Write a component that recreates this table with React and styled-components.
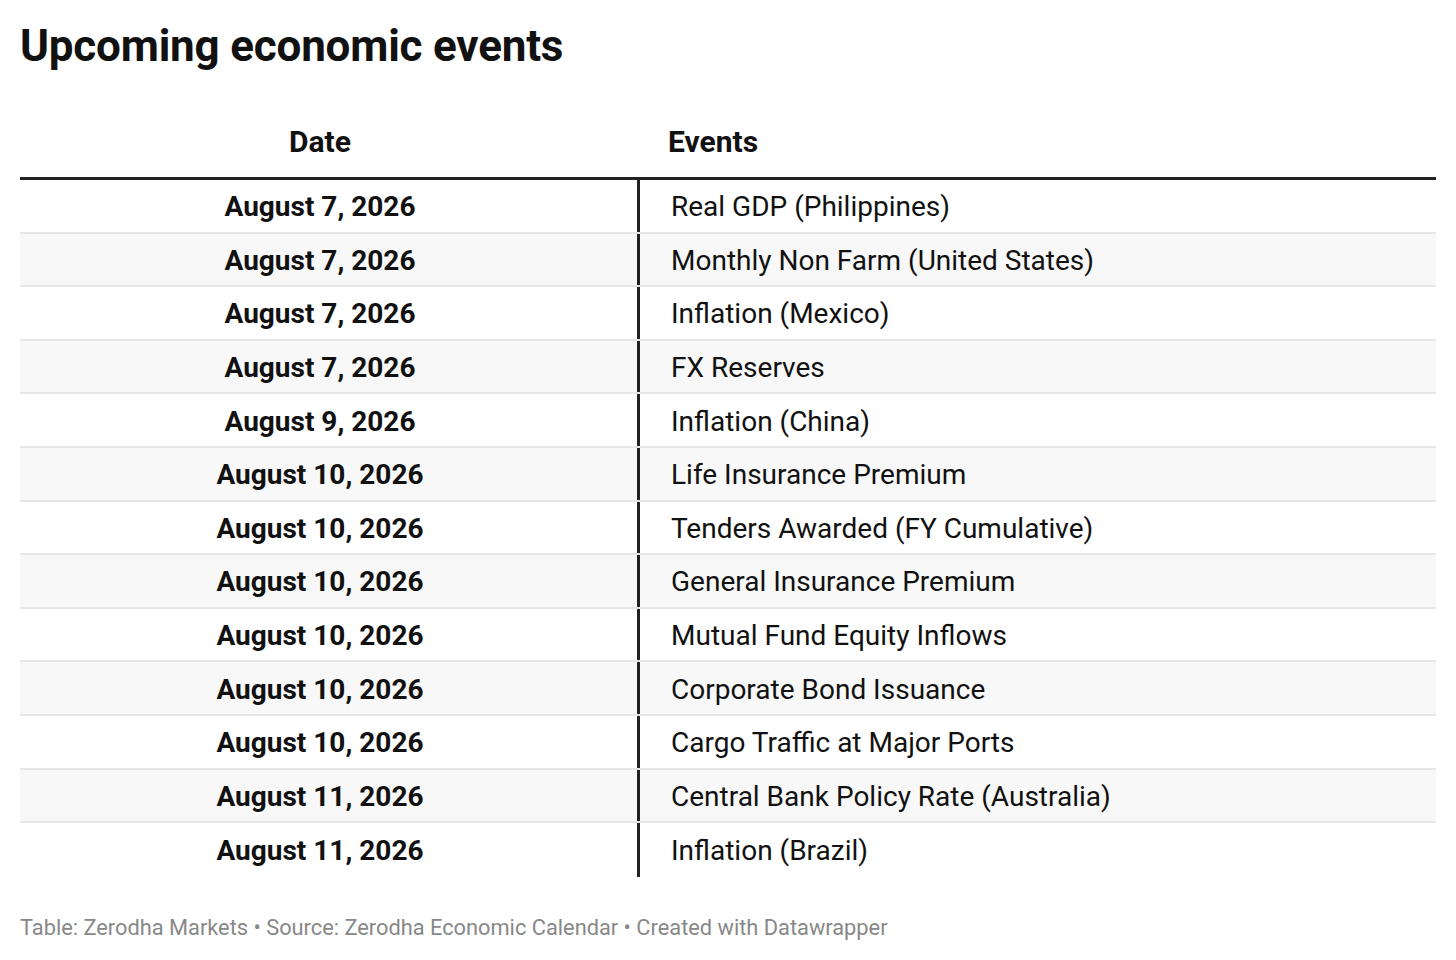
import styled, { createGlobalStyle } from "styled-components";

const GlobalStyle = createGlobalStyle`
  body {
    margin: 0;
    background: #ffffff;
    font-family: Roboto, "Liberation Sans", sans-serif;
    color: #111111;
  }
`;

const rows = [
  ["August 7, 2026", "Real GDP (Philippines)"],
  ["August 7, 2026", "Monthly Non Farm (United States)"],
  ["August 7, 2026", "Inflation (Mexico)"],
  ["August 7, 2026", "FX Reserves"],
  ["August 9, 2026", "Inflation (China)"],
  ["August 10, 2026", "Life Insurance Premium"],
  ["August 10, 2026", "Tenders Awarded (FY Cumulative)"],
  ["August 10, 2026", "General Insurance Premium"],
  ["August 10, 2026", "Mutual Fund Equity Inflows"],
  ["August 10, 2026", "Corporate Bond Issuance"],
  ["August 10, 2026", "Cargo Traffic at Major Ports"],
  ["August 11, 2026", "Central Bank Policy Rate (Australia)"],
  ["August 11, 2026", "Inflation (Brazil)"],
];

function App() {
  return (
    <>
      <GlobalStyle />
      <Page>
        <Title>Upcoming economic events</Title>
        <Table>
          <HeadRow>
            <HeadCell $center>Date</HeadCell>
            <HeadCell>Events</HeadCell>
          </HeadRow>
          {rows.map(([date, event], i) => (
            <Row key={i} $striped={i % 2 === 1} $last={i === rows.length - 1}>
              <DateCell>{date}</DateCell>
              <EventCell>{event}</EventCell>
            </Row>
          ))}
        </Table>
        <Footer>
          Table: Zerodha Markets • Source: Zerodha Economic Calendar • Created
          with Datawrapper
        </Footer>
      </Page>
    </>
  );
}

const Page = styled.div`
  padding: 18px 20px 0 20px;
`;

const Title = styled.h1`
  margin: 0;
  font-size: 44px;
  font-weight: 700;
  line-height: 56px;
  letter-spacing: -0.2px;
`;

const Table = styled.div`
  margin-top: 31px;
  display: flex;
  flex-direction: column;
`;

const HeadRow = styled.div`
  display: grid;
  grid-template-columns: 620px 1fr;
  height: 72px;
  border-bottom: 3px solid #222222;
`;

const HeadCell = styled.div`
  display: flex;
  align-items: center;
  justify-content: ${(p) => (p.$center ? "center" : "flex-start")};
  padding-left: ${(p) => (p.$center ? "0" : "28px")};
  padding-right: ${(p) => (p.$center ? "20px" : "0")};
  font-size: 30px;
  font-weight: 700;
`;

const Row = styled.div`
  display: grid;
  grid-template-columns: 620px 1fr;
  height: 53.6px;
  box-sizing: border-box;
  background: ${(p) => (p.$striped ? "#f8f8f8" : "#ffffff")};
  border-bottom: ${(p) => (p.$last ? "none" : "2px solid #e6e6e6")};
`;

const DateCell = styled.div`
  display: flex;
  align-items: center;
  justify-content: center;
  padding: 2px 17px 0 0;
  font-size: 28px;
  font-weight: 700;
  border-right: 3px solid #222222;
`;

const EventCell = styled.div`
  display: flex;
  align-items: center;
  padding: 2px 0 0 31px;
  font-size: 28px;
  font-weight: 400;
`;

const Footer = styled.div`
  margin-top: 38px;
  font-size: 21.8px;
  color: #888888;
`;

export default App;
